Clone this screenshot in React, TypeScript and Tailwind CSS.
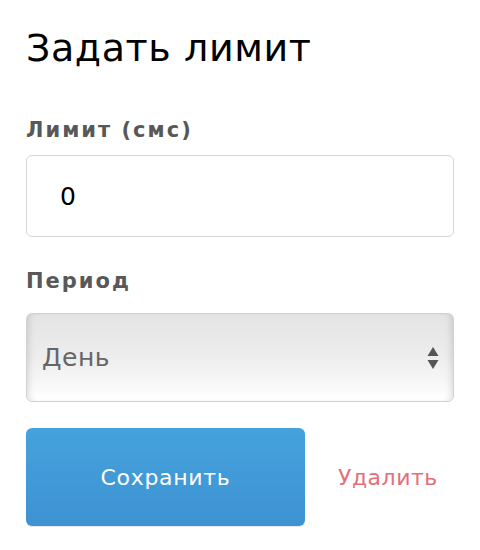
import { useState } from 'react';

export default function App() {
    const [limit, setLimit] = useState('0');
    const [period, setPeriod] = useState('day');

    return (
        <div className="w-[480px] h-[550px] bg-white px-[26px] pt-[24px] font-['DejaVu_Sans',sans-serif]">
            <h2 className="text-[38px] leading-[48px] text-black tracking-[0.6px]">Задать лимит</h2>

            <label className="block mt-[44px] text-[21px] leading-[28px] font-bold text-[#585858] tracking-[2px]">
                Лимит (смс)
            </label>
            <input
                value={limit}
                onChange={e => setLimit(e.target.value)}
                className="mt-[11px] block w-full h-[82px] rounded-[6px] border border-[#d6d6d6] px-[33px] text-[25px] text-black outline-none"
            />

            <label className="block mt-[30px] text-[21px] leading-[28px] font-bold text-[#585858] tracking-[2px]">
                Период
            </label>
            <div className="relative mt-[18px]">
                <select
                    value={period}
                    onChange={e => setPeriod(e.target.value)}
                    className="appearance-none block w-full h-[89px] rounded-[6px] border border-[#d2d2d2] px-[15px] text-[25px] tracking-[0.5px] text-[#666] bg-gradient-to-b from-[#e4e4e4] via-[#ededed] to-[#ffffff] shadow-[inset_6px_0_6px_-4px_rgba(0,0,0,0.12),inset_-6px_0_6px_-4px_rgba(0,0,0,0.12)] outline-none"
                >
                    <option value="day">День</option>
                    <option value="week">Неделя</option>
                    <option value="month">Месяц</option>
                </select>
                <svg className="absolute right-[15px] top-[33px] pointer-events-none" width="12" height="24" viewBox="0 0 12 24">
                    <path d="M6 1 L11.5 10 L0.5 10 Z" fill="#555" />
                    <path d="M0.5 14 L11.5 14 L6 23 Z" fill="#555" />
                </svg>
            </div>

            <div className="flex items-center mt-[26px]">
                <button className="w-[279px] h-[98px] rounded-[6px] bg-gradient-to-b from-[#45a2dc] to-[#3e92d2] text-white text-[22px] tracking-[0.7px] shadow-[0_1px_1px_rgba(0,0,0,0.1)]">
                    Сохранить
                </button>
                <button className="ml-[33px] text-[22px] tracking-[0.5px] text-[#e46f7b]">Удалить</button>
            </div>
        </div>
    );
}
